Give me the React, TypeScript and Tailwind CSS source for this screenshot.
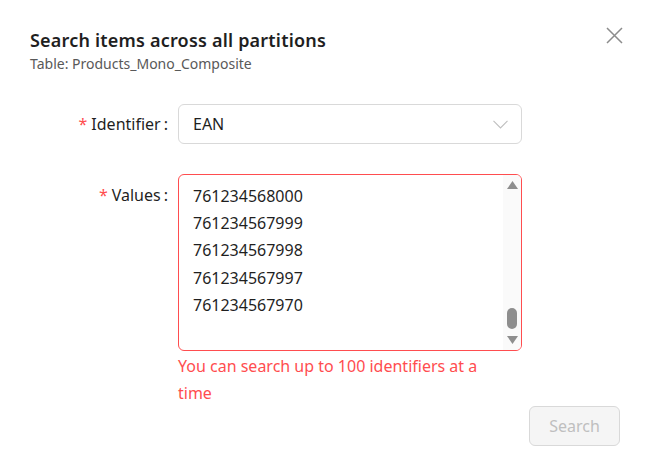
const values = ['761234568000', '761234567999', '761234567998', '761234567997', '761234567970'];

export default function App() {
  return (
    <div className="w-[650px] h-[471px] bg-white font-['Noto_Sans',sans-serif] text-[#1f1f1f] relative">
      <button className="absolute right-[27px] top-[27px]">
        <svg width="17" height="17" viewBox="0 0 17 17" fill="none">
          <path d="M1 1 L16 16 M16 1 L1 16" stroke="#8c8c8c" strokeWidth="1.5" />
        </svg>
      </button>

      <div className="pl-[30px] pt-[28px]">
        <h2 className="text-[18px] font-semibold leading-[25px] tracking-[0.2px] text-[#1f1f1f]">Search items across all partitions</h2>
        <p className="text-[14px] leading-[19px] text-[#595959] mt-[1px]">Table: Products_Mono_Composite</p>
      </div>

      <div className="mt-[31px] flex flex-col gap-[30px]">
        <div className="flex items-center">
          <div className="w-[178px] text-right text-[16px] leading-[27px] pr-[10px]">
            <span className="text-[#ff4d4f] mr-[4px]">*</span>Identifier<span className="ml-[3px]">:</span>
          </div>
          <div className="w-[344px] h-[40px] border border-[#d9d9d9] rounded-[6px] flex items-center justify-between pl-[14px] pr-[13px]">
            <span className="text-[16px]">EAN</span>
            <svg width="15" height="9" viewBox="0 0 15 9" fill="none">
              <path d="M0.5 0.8 L7.5 8 L14.5 0.8" stroke="#bfbfbf" strokeWidth="1.1" />
            </svg>
          </div>
        </div>

        <div className="flex items-start">
          <div className="w-[178px] text-right text-[16px] leading-[27px] pr-[10px] pt-[8px]">
            <span className="text-[#ff4d4f] mr-[4px]">*</span>Values<span className="ml-[3px]">:</span>
          </div>
          <div className="w-[344px]">
            <div className="h-[177px] border border-[#ff4d4f] rounded-[6px] flex overflow-hidden">
              <div className="flex-1 pl-[14px] pt-[8px] text-[16px] leading-[27.2px]">
                {values.map((v) => (
                  <div key={v}>{v}</div>
                ))}
              </div>
              <div className="w-[18px] bg-[#fafafa] flex flex-col items-center justify-between py-[6px]">
                <svg width="11" height="8" viewBox="0 0 11 8"><path d="M5.5 0 L11 8 L0 8 Z" fill="#8e8e8e" /></svg>
                <div className="flex flex-col items-center gap-[7px] mt-auto">
                  <div className="w-[10px] h-[21px] rounded-[5px] bg-[#8e8e8e]" />
                  <svg width="11" height="8" viewBox="0 0 11 8"><path d="M0 0 L11 0 L5.5 8 Z" fill="#8e8e8e" /></svg>
                </div>
              </div>
            </div>
            <p className="text-[16px] leading-[27px] text-[#ff4d4f] pr-[16px] mt-[2px]">
              You can search up to 100 identifiers at a time
            </p>
          </div>
        </div>
      </div>

      <div className="flex justify-end pr-[30px] mt-[-1px]">
        <button className="w-[91px] h-[40px] rounded-[6px] border border-[#d9d9d9] bg-[#f5f5f5] text-[#bfbfbf] text-[16px]">
          Search
        </button>
      </div>
    </div>
  );
}
